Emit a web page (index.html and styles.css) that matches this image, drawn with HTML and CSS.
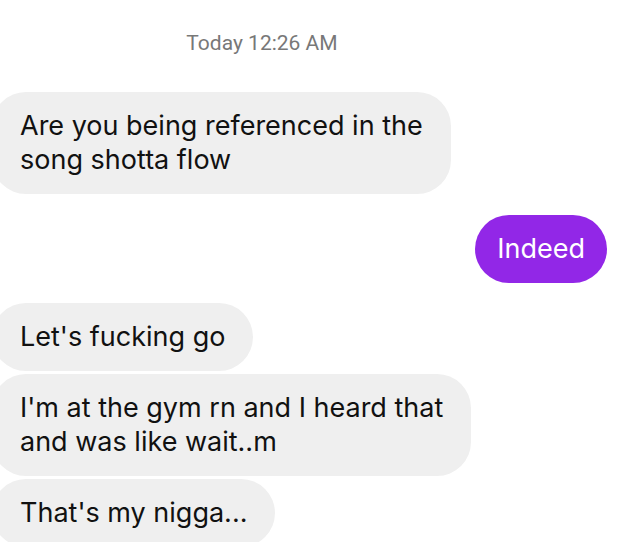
FILE: index.html
```html
<!DOCTYPE html>
<html>
<head>
<meta charset="utf-8">
<link rel="stylesheet" href="styles.css">
</head>
<body>
<div class="chat">
  <div class="stamp">Today 12:26 AM</div>
  <div class="row in"><div class="bubble recv">Are you being referenced in the<br>song shotta flow</div></div>
  <div class="row out"><div class="bubble sent">Indeed</div></div>
  <div class="group">
    <div class="row in"><div class="bubble recv">Let's fucking go</div></div>
    <div class="row in"><div class="bubble recv">I'm at the gym rn and I heard that<br>and was like wait..m</div></div>
    <div class="row in"><div class="bubble recv">That's my nigga...</div></div>
  </div>
</div>
</body>
</html>
```
FILE: styles.css
```css
html, body {
  margin: 0;
  padding: 0;
  background: #ffffff;
}
.chat {
  width: 621px;
  height: 542px;
  overflow: hidden;
  display: flex;
  flex-direction: column;
  font-family: Inter, "Liberation Sans", sans-serif;
}
.stamp {
  width: 524px;
  text-align: center;
  font-family: Roboto, "Liberation Sans", sans-serif;
  font-size: 21px;
  line-height: 24px;
  color: #787878;
  margin-top: 31px;
  margin-bottom: 37px;
}
.row {
  display: flex;
}
.row.out {
  justify-content: flex-end;
  padding-right: 14px;
  margin-top: 21px;
  margin-bottom: 20px;
}
.group {
  display: flex;
  flex-direction: column;
  gap: 3px;
}
.bubble {
  font-size: 27px;
  line-height: 34px;
  border-radius: 34px;
  padding: 17px 28px 17px 21px;
}
.recv {
  background: #efefef;
  color: #111111;
  margin-left: -8px;
  padding-left: 28px;
}
.sent {
  background: #9227e7;
  color: #ffffff;
  padding: 17px 22px;
}
```
